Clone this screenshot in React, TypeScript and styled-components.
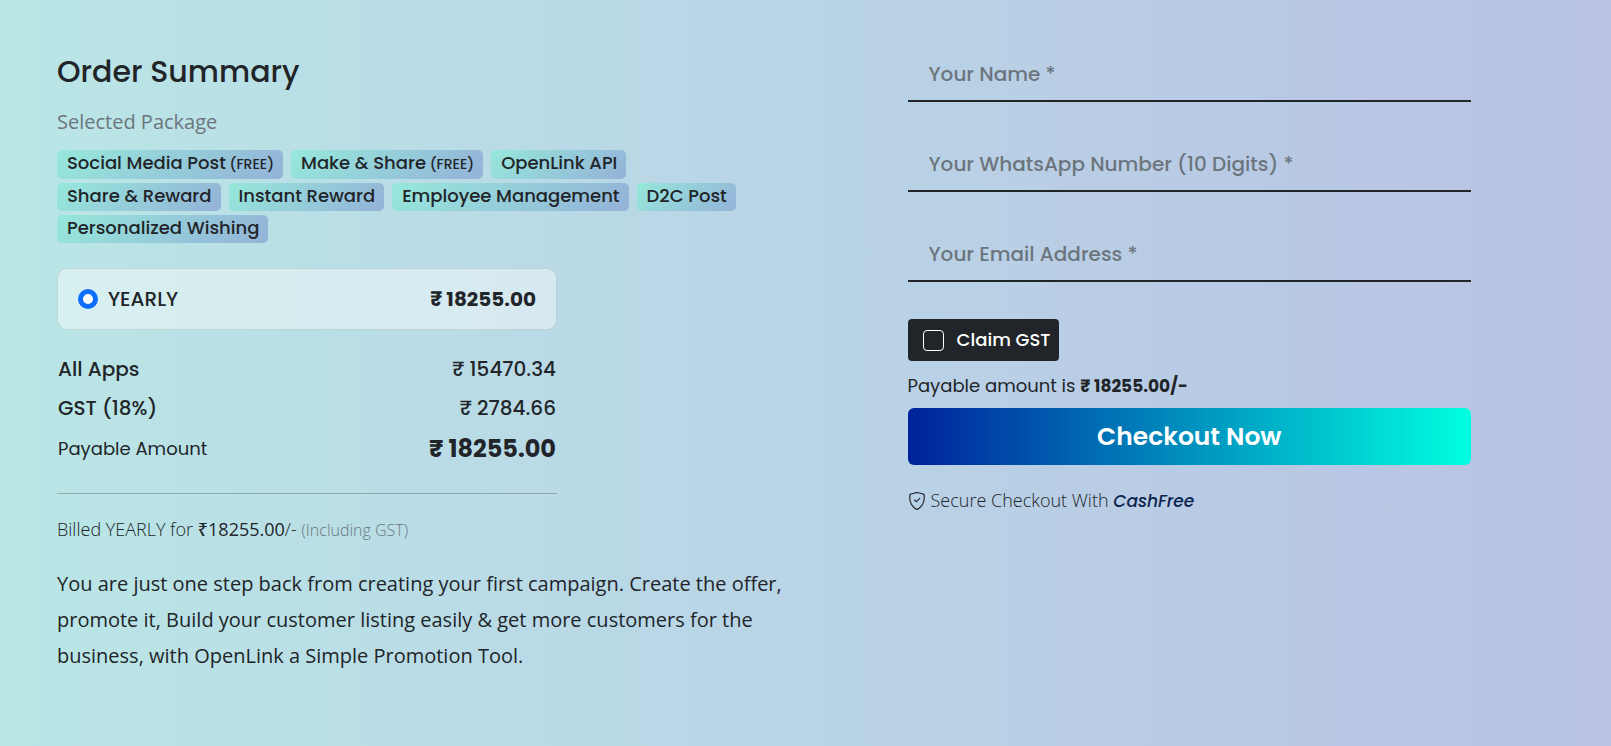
import React, { useState } from "react";
import styled, { createGlobalStyle } from "styled-components";

const display = `Poppins, Inter, sans-serif`;
const copy = `"Open Sans", "Noto Sans", sans-serif`;
const ink = "#212529";
const muted = "#6c757d";

const GlobalStyle = createGlobalStyle`
  *, *::before, *::after { box-sizing: border-box; }
  body {
    margin: 0;
    min-height: 100vh;
    color: ${ink};
    font-family: ${display};
    font-size: 18px;
    background: linear-gradient(90deg, #bae6e6 0%, #b9d4e6 50%, #b9c2e3 100%);
  }
`;

const Page = styled.main`
  display: grid;
  grid-template-columns: 13fr 10fr;
  column-gap: 118px;
  align-items: start;
  padding: 42px 140px 72px 57px;

  @media (max-width: 900px) {
    grid-template-columns: 1fr;
    row-gap: 32px;
    padding: 24px;
  }
`;

const Summary = styled.section`
  padding-top: 6px;
`;

const Title = styled.h1`
  margin: 0 0 14px;
  font-size: 30px;
  line-height: 48px;
  font-weight: 500;
`;

const Caption = styled.h2`
  margin: 0 0 16px;
  font: 400 20px/24px ${copy};
  color: ${muted};
`;

const TagList = styled.ul`
  display: flex;
  flex-wrap: wrap;
  gap: 4px 8px;
  margin: 0 0 25px;
  padding: 0;
  list-style: none;
`;

const Tag = styled.li`
  padding: 0 9px 2px 10px;
  border-radius: 5px;
  font-size: 18px;
  line-height: 26px;
  font-weight: 500;
  white-space: nowrap;
  background: linear-gradient(135deg, #96e8db, #94b2d8);

  small { font-size: 14px; }
`;

const Billing = styled.div`
  max-width: 500px;
`;

const Plan = styled.label`
  display: flex;
  align-items: center;
  gap: 10px;
  padding: 15px 20px;
  border: 1px solid rgba(33, 37, 41, 0.13);
  border-radius: 10px;
  font-size: 20px;
  line-height: 30px;
  font-weight: 500;
  background: rgba(255, 255, 255, 0.42);

  strong { margin-left: auto; font-weight: 700; }
`;

const Radio = styled.input`
  appearance: none;
  width: 20px;
  height: 20px;
  margin: 0;
  border: 1px solid #adb5bd;
  border-radius: 50%;
  background: #fff;

  &:checked { border: 5px solid #0d6efd; }
`;

const Totals = styled.table`
  width: 100%;
  margin: 20px 0 23px;
  border-collapse: collapse;
  font-size: 20px;
  line-height: 39px;
  font-weight: 500;

  th, td { padding: 0 1px; }
  th { font-weight: 500; text-align: left; }
  td { text-align: right; }
`;

const PayableRow = styled.tr`
  line-height: 42px;

  th { font-size: 18px; font-weight: 400; }
  td { font-size: 24px; font-weight: 700; }
`;

const Rule = styled.hr`
  height: 1px;
  margin: 0 0 21px;
  border: 0;
  background: rgba(33, 37, 41, 0.28);
`;

const Billed = styled.p`
  margin: 0 0 22px;
  font: 300 18px/28px ${copy};

  b { font-weight: 500; }
  small { font-size: 16px; color: ${muted}; }
`;

const Pitch = styled.p`
  margin: 0;
  font: 400 20px/36px ${copy};
`;

const Form = styled.form`
  display: flex;
  flex-direction: column;
`;

const Field = styled.input`
  width: 100%;
  height: 60px;
  margin-bottom: 30px;
  padding: 6px 21px 0;
  border: 0;
  border-bottom: 2px solid ${ink};
  outline: 0;
  font: 500 20px/30px ${display};
  color: ${ink};
  background: transparent;

  &::placeholder { color: ${muted}; opacity: 1; }
`;

const Claim = styled.label`
  display: flex;
  align-items: center;
  align-self: flex-start;
  gap: 13px;
  height: 42px;
  margin: 7px 0 11px;
  padding: 0 9px 0 15px;
  border-radius: 4px;
  font-weight: 500;
  color: #fff;
  background: ${ink};

  span { padding-bottom: 2px; }
`;

const Tick = styled.input`
  appearance: none;
  width: 21px;
  height: 21px;
  margin: 0;
  border: 1px solid #fff;
  border-radius: 4px;

  &:checked { background: #0d6efd; }
`;

const Payable = styled.p`
  margin: 0 0 8px;
  line-height: 28px;

  strong { font-size: 17px; font-weight: 700; }
`;

const Checkout = styled.button`
  height: 57px;
  border: 0;
  border-radius: 6px;
  font: 600 25px/36px ${display};
  color: #fff;
  background: linear-gradient(90deg, #00229c, #00ffe0);
  cursor: pointer;
`;

const Secure = styled.p`
  display: flex;
  align-items: center;
  gap: 5px;
  margin: 21px 0 0;
  font: 300 18px/28px ${copy};

  em { font-family: ${display}; font-size: 17px; font-weight: 500; color: #0b2550; }
`;

const ShieldIcon = () => (
  <svg width="18" height="18" viewBox="0 0 16 16" fill={ink} aria-hidden="true">
    <path d="M5.338 1.59a61.44 61.44 0 0 0-2.837.856.481.481 0 0 0-.328.39c-.554 4.157.726 7.19 2.253 9.188a10.725 10.725 0 0 0 2.287 2.233c.346.244.652.42.893.533.12.057.218.095.293.118a.55.55 0 0 0 .101.025.615.615 0 0 0 .1-.025c.076-.023.174-.061.294-.118.24-.113.547-.29.893-.533a10.726 10.726 0 0 0 2.287-2.233c1.527-1.997 2.807-5.031 2.253-9.188a.48.48 0 0 0-.328-.39c-.651-.213-1.75-.56-2.837-.855C9.552 1.29 8.531 1.067 8 1.067c-.53 0-1.552.223-2.662.524zM5.072.56C6.157.265 7.31 0 8 0s1.843.265 2.928.56c1.11.3 2.229.655 2.887.87a1.54 1.54 0 0 1 1.044 1.262c.596 4.477-.787 7.795-2.465 9.99a11.775 11.775 0 0 1-2.517 2.453 7.159 7.159 0 0 1-1.048.625c-.28.132-.581.24-.829.24s-.548-.108-.829-.24a7.158 7.158 0 0 1-1.048-.625 11.777 11.777 0 0 1-2.517-2.453C1.928 10.487.545 7.169 1.141 2.692A1.54 1.54 0 0 1 2.185 1.43 62.456 62.456 0 0 1 5.072.56z" />
    <path d="M5.9 7.1 7.5 8.6 10.5 5.6" fill="none" stroke={ink} strokeWidth="1" strokeLinecap="round" strokeLinejoin="round" />
  </svg>
);

const packages = [
  { name: "Social Media Post", free: true },
  { name: "Make & Share", free: true },
  { name: "OpenLink API" },
  { name: "Share & Reward" },
  { name: "Instant Reward" },
  { name: "Employee Management" },
  { name: "D2C Post" },
  { name: "Personalized Wishing" },
];

const fields = [
  { type: "text", label: "Your Name *" },
  { type: "tel", label: "Your WhatsApp Number (10 Digits) *" },
  { type: "email", label: "Your Email Address *" },
];

export default function App() {
  const [claim, setClaim] = useState(false);
  return (
    <>
      <GlobalStyle />
      <Page>
        <Summary>
          <Title>Order Summary</Title>
          <Caption>Selected Package</Caption>
          <TagList>
            {packages.map((p) => (
              <Tag key={p.name}>
                {p.name}
                {p.free && <small> (FREE)</small>}
              </Tag>
            ))}
          </TagList>
          <Billing>
            <Plan>
              <Radio type="radio" name="plan" defaultChecked />
              YEARLY
              <strong>₹ 18255.00</strong>
            </Plan>
            <Totals>
              <tbody>
                <tr><th scope="row">All Apps</th><td>₹ 15470.34</td></tr>
                <tr><th scope="row">GST (18%)</th><td>₹ 2784.66</td></tr>
                <PayableRow><th scope="row">Payable Amount</th><td>₹ 18255.00</td></PayableRow>
              </tbody>
            </Totals>
            <Rule />
          </Billing>
          <Billed>
            Billed YEARLY for <b>₹18255.00</b>/- <small>(Including GST)</small>
          </Billed>
          <Pitch>
            You are just one step back from creating your first campaign. Create the offer,
            promote it, Build your customer listing easily &amp; get more customers for the
            business, with OpenLink a Simple Promotion Tool.
          </Pitch>
        </Summary>
        <Form onSubmit={(e) => e.preventDefault()}>
          {fields.map((f) => (
            <Field key={f.type} type={f.type} placeholder={f.label} aria-label={f.label} />
          ))}
          <Claim>
            <Tick type="checkbox" checked={claim} onChange={(e) => setClaim(e.target.checked)} />
            <span>Claim GST</span>
          </Claim>
          <Payable>Payable amount is <strong>₹ 18255.00/-</strong></Payable>
          <Checkout type="submit">Checkout Now</Checkout>
          <Secure>
            <ShieldIcon />
            <span>Secure Checkout With <em>CashFree</em></span>
          </Secure>
        </Form>
      </Page>
    </>
  );
}
